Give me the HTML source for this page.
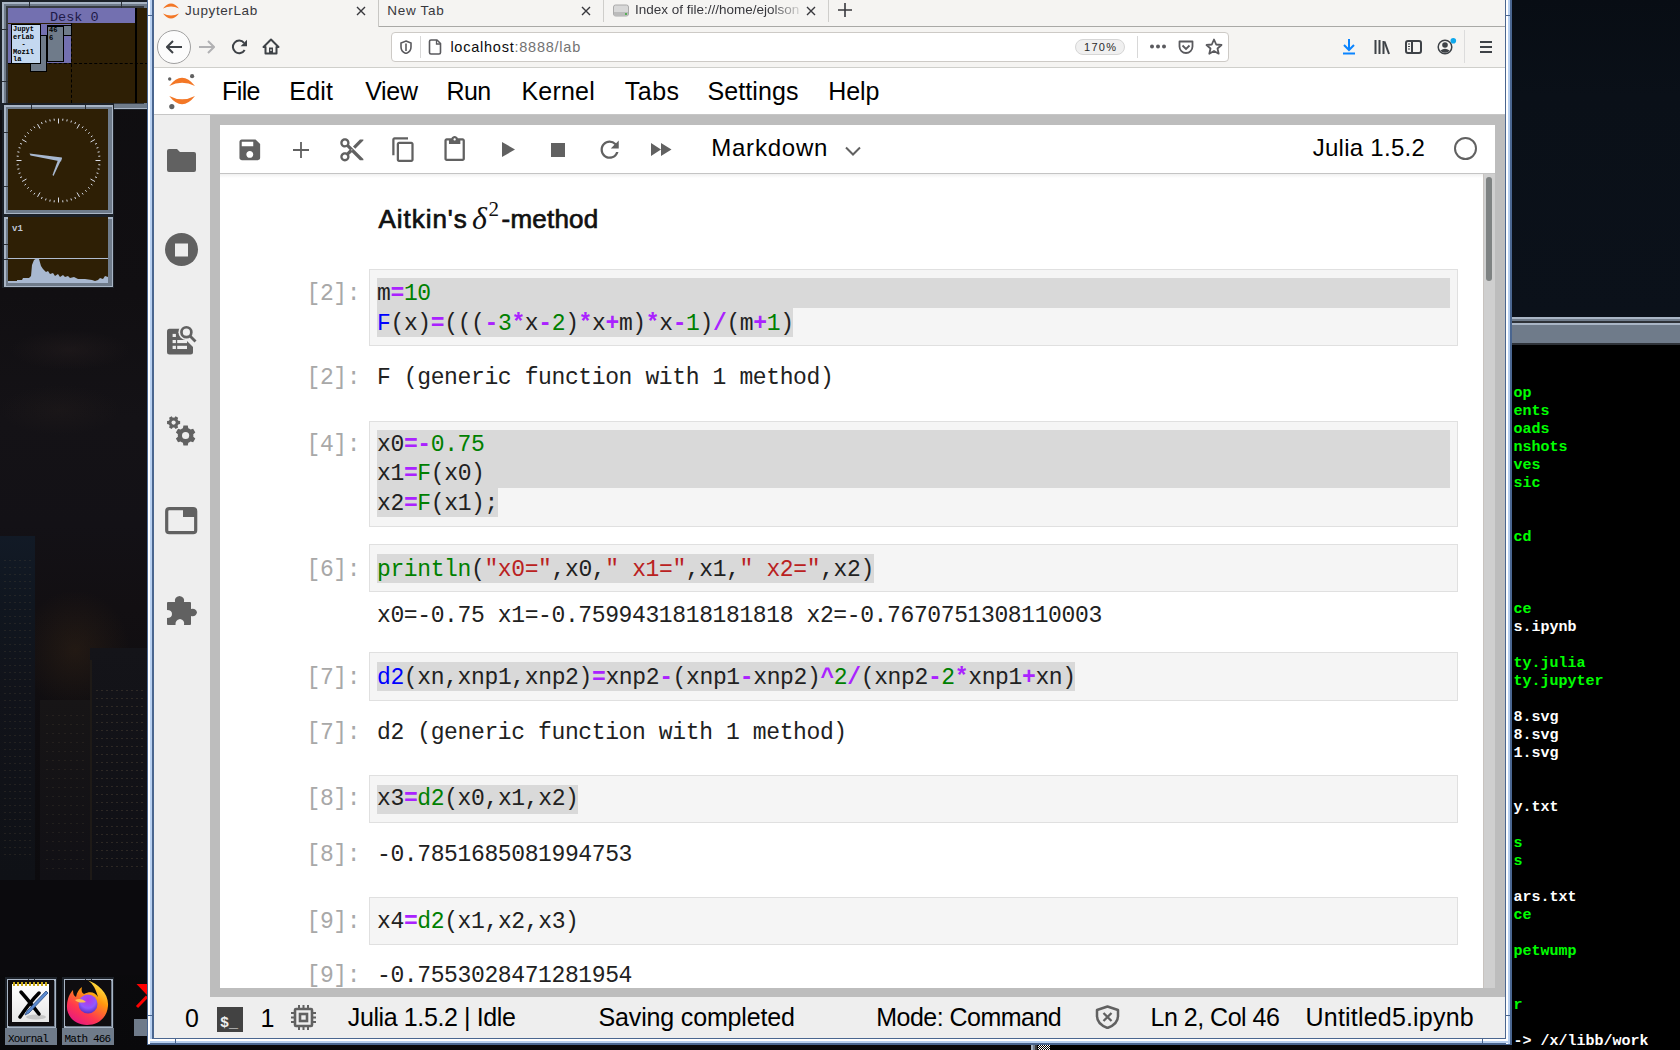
<!DOCTYPE html>
<html><head><meta charset="utf-8">
<style>
*{box-sizing:border-box;margin:0;padding:0}
html,body{width:1680px;height:1050px;overflow:hidden;background:#0c0b0d;position:relative}
.t{position:absolute;white-space:pre}
.r{position:absolute;display:block}
</style></head><body>
<div class="r" style="left:0px;top:0px;width:1680px;height:1050px;background:linear-gradient(180deg,#0e0d10 0%,#110f12 28%,#141216 40%,#131116 50%,#120f12 58%,#0f0d10 70%,#0c0b0e 84%,#09090b 100%);"></div>
<div class="r" style="left:0px;top:290px;width:147px;height:690px;background:radial-gradient(ellipse 60px 20px at 70px 60px,rgba(45,35,35,0.35),rgba(0,0,0,0)),radial-gradient(ellipse 60px 25px at 60px 120px,rgba(40,32,30,0.3),rgba(0,0,0,0)),radial-gradient(ellipse 55px 60px at 75px 360px,rgba(55,38,22,0.45),rgba(0,0,0,0));"></div>
<div class="r" style="left:0px;top:536px;width:35px;height:344px;background:linear-gradient(180deg,#121a26 0%,#10161f 20%,#11131a 45%,#0f1116 100%);"></div>
<div class="r" style="left:40px;top:700px;width:50px;height:180px;background:linear-gradient(180deg,#171516,#111015);"></div>
<div class="r" style="left:90px;top:648px;width:57px;height:232px;background:linear-gradient(180deg,#141419,#101015);"></div>
<div class="r" style="left:90px;top:660px;width:2px;height:220px;background:#1e1a17;"></div>
<div class="r" style="left:0px;top:880px;width:147px;height:95px;background:#0b0a0d;"></div>
<div class="r" style="left:4px;top:560px;width:28px;height:300px;background:repeating-linear-gradient(180deg,rgba(90,80,60,0.25) 0 1px,transparent 1px 7px);-webkit-mask-image:repeating-linear-gradient(90deg,#000 0 2px,transparent 2px 5px)"></div>
<div class="r" style="left:96px;top:690px;width:48px;height:180px;background:repeating-linear-gradient(180deg,rgba(110,95,70,0.3) 0 1px,transparent 1px 8px);-webkit-mask-image:repeating-linear-gradient(90deg,#000 0 2px,transparent 2px 5px)"></div>
<div class="r" style="left:46px;top:715px;width:40px;height:160px;background:repeating-linear-gradient(180deg,rgba(90,80,60,0.22) 0 1px,transparent 1px 9px);-webkit-mask-image:repeating-linear-gradient(90deg,#000 0 2px,transparent 2px 6px)"></div>
<div class="r" style="left:1512px;top:0px;width:168px;height:317px;background:linear-gradient(180deg,#080d14 0%,#0a1018 30%,#0b111a 100%);"></div>
<div class="r" style="left:1512px;top:317px;width:168px;height:28px;background:#6f7b8a;"></div>
<div class="r" style="left:1512px;top:317px;width:168px;height:2px;background:#a9b5c5;"></div>
<div class="r" style="left:1512px;top:321px;width:168px;height:2px;background:#2e3238;"></div>
<div class="r" style="left:1512px;top:323px;width:168px;height:2px;background:#a9b5c5;"></div>
<div class="r" style="left:1512px;top:343px;width:168px;height:2px;background:#2e3238;"></div>
<div class="r" style="left:1512px;top:345px;width:168px;height:705px;background:#000;"></div>
<div class="t" style="left:1513.50px;top:384.51px;font-family:'Liberation Mono';font-size:15px;line-height:1.1328em;color:#00ff00;font-weight:bold;letter-spacing:0px;">op</div>
<div class="t" style="left:1513.50px;top:402.51px;font-family:'Liberation Mono';font-size:15px;line-height:1.1328em;color:#00ff00;font-weight:bold;letter-spacing:0px;">ents</div>
<div class="t" style="left:1513.50px;top:420.51px;font-family:'Liberation Mono';font-size:15px;line-height:1.1328em;color:#00ff00;font-weight:bold;letter-spacing:0px;">oads</div>
<div class="t" style="left:1513.50px;top:438.51px;font-family:'Liberation Mono';font-size:15px;line-height:1.1328em;color:#00ff00;font-weight:bold;letter-spacing:0px;">nshots</div>
<div class="t" style="left:1513.50px;top:456.51px;font-family:'Liberation Mono';font-size:15px;line-height:1.1328em;color:#00ff00;font-weight:bold;letter-spacing:0px;">ves</div>
<div class="t" style="left:1513.50px;top:474.51px;font-family:'Liberation Mono';font-size:15px;line-height:1.1328em;color:#00ff00;font-weight:bold;letter-spacing:0px;">sic</div>
<div class="t" style="left:1513.50px;top:528.51px;font-family:'Liberation Mono';font-size:15px;line-height:1.1328em;color:#00ff00;font-weight:bold;letter-spacing:0px;">cd</div>
<div class="t" style="left:1513.50px;top:600.51px;font-family:'Liberation Mono';font-size:15px;line-height:1.1328em;color:#00ff00;font-weight:bold;letter-spacing:0px;">ce</div>
<div class="t" style="left:1513.50px;top:618.51px;font-family:'Liberation Mono';font-size:15px;line-height:1.1328em;color:#ffffff;font-weight:bold;letter-spacing:0px;">s.ipynb</div>
<div class="t" style="left:1513.50px;top:654.51px;font-family:'Liberation Mono';font-size:15px;line-height:1.1328em;color:#00ff00;font-weight:bold;letter-spacing:0px;">ty.julia</div>
<div class="t" style="left:1513.50px;top:672.51px;font-family:'Liberation Mono';font-size:15px;line-height:1.1328em;color:#00ff00;font-weight:bold;letter-spacing:0px;">ty.jupyter</div>
<div class="t" style="left:1513.50px;top:708.51px;font-family:'Liberation Mono';font-size:15px;line-height:1.1328em;color:#ffffff;font-weight:bold;letter-spacing:0px;">8.svg</div>
<div class="t" style="left:1513.50px;top:726.51px;font-family:'Liberation Mono';font-size:15px;line-height:1.1328em;color:#ffffff;font-weight:bold;letter-spacing:0px;">8.svg</div>
<div class="t" style="left:1513.50px;top:744.51px;font-family:'Liberation Mono';font-size:15px;line-height:1.1328em;color:#ffffff;font-weight:bold;letter-spacing:0px;">1.svg</div>
<div class="t" style="left:1513.50px;top:798.51px;font-family:'Liberation Mono';font-size:15px;line-height:1.1328em;color:#ffffff;font-weight:bold;letter-spacing:0px;">y.txt</div>
<div class="t" style="left:1513.50px;top:834.51px;font-family:'Liberation Mono';font-size:15px;line-height:1.1328em;color:#00ff00;font-weight:bold;letter-spacing:0px;">s</div>
<div class="t" style="left:1513.50px;top:852.51px;font-family:'Liberation Mono';font-size:15px;line-height:1.1328em;color:#00ff00;font-weight:bold;letter-spacing:0px;">s</div>
<div class="t" style="left:1513.50px;top:888.51px;font-family:'Liberation Mono';font-size:15px;line-height:1.1328em;color:#ffffff;font-weight:bold;letter-spacing:0px;">ars.txt</div>
<div class="t" style="left:1513.50px;top:906.51px;font-family:'Liberation Mono';font-size:15px;line-height:1.1328em;color:#00ff00;font-weight:bold;letter-spacing:0px;">ce</div>
<div class="t" style="left:1513.50px;top:942.51px;font-family:'Liberation Mono';font-size:15px;line-height:1.1328em;color:#00ff00;font-weight:bold;letter-spacing:0px;">petwump</div>
<div class="t" style="left:1513.50px;top:996.51px;font-family:'Liberation Mono';font-size:15px;line-height:1.1328em;color:#00ff00;font-weight:bold;letter-spacing:0px;">r</div>
<div class="t" style="left:1513.50px;top:1032.51px;font-family:'Liberation Mono';font-size:15px;line-height:1.1328em;color:#ffffff;font-weight:bold;letter-spacing:0px;">-> /x/libb/work</div>
<div class="r" style="left:0px;top:0px;width:150px;height:110px;background:#1c2128;"></div>
<div class="r" style="left:1.5px;top:1.5px;width:147px;height:107px;background:#a9b5c5;"></div>
<div class="r" style="left:4px;top:4px;width:144px;height:104px;background:#6f7b8a;"></div>
<div class="r" style="left:6px;top:6px;width:138px;height:98px;background:#383c42;"></div>
<div class="r" style="left:29px;top:1.5px;width:1.2px;height:6px;background:#2a2f36;"></div>
<div class="r" style="left:121px;top:1.5px;width:1.2px;height:6px;background:#2a2f36;"></div>
<div class="r" style="left:1.5px;top:29px;width:6px;height:1.2px;background:#2a2f36;"></div>
<div class="r" style="left:1.5px;top:81px;width:6px;height:1.2px;background:#2a2f36;"></div>
<div class="r" style="left:8px;top:8px;width:140px;height:95px;background:#2e1f05;"></div>
<div class="r" style="left:8px;top:8px;width:127px;height:15px;background:#7370b0;"></div>
<div class="t" style="left:50.00px;top:9.76px;font-family:'Liberation Mono';font-size:13.5px;line-height:1.1328em;color:#1e1a48;font-weight:normal;letter-spacing:0px;">Desk 0</div>
<div class="r" style="left:135px;top:8px;width:2px;height:95px;background:#000;"></div>
<div class="r" style="left:8px;top:63px;width:140px;height:0;border-top:1px dashed #000"></div>
<div class="r" style="left:71px;top:23px;width:0;height:80px;border-left:1px dashed #000"></div>
<div class="r" style="left:8px;top:24px;width:63px;height:39px;background:#7370b0;"></div>
<div class="r" style="left:30px;top:35px;width:17px;height:37px;background:#000;"></div>
<div class="r" style="left:31px;top:36px;width:15px;height:35px;background:#6f7b8a;"></div>
<div class="r" style="left:47px;top:25px;width:25px;height:11px;background:#000;"></div>
<div class="r" style="left:48px;top:26px;width:23px;height:9px;background:#6f7b8a;"></div>
<div class="r" style="left:47px;top:26px;width:17px;height:36px;background:#000;"></div>
<div class="r" style="left:48px;top:27px;width:15px;height:34px;background:#6f7b8a;"></div>
<div class="r" style="left:11px;top:24px;width:30px;height:40px;background:#000;"></div>
<div class="r" style="left:12px;top:25px;width:28px;height:38px;background:#c4d8f0;"></div>
<div class="t" style="left:13px;top:26px;font:bold 7px/7.5px 'Liberation Mono';color:#000">Jupyt
erLab
  -
Mozil
la</div>
<div class="t" style="left:49px;top:27px;font:bold 7px/7.5px 'Liberation Mono';color:#000">46
6</div>
<div class="r" style="left:2px;top:103px;width:112px;height:112px;background:#1c2128;"></div>
<div class="r" style="left:3.5px;top:104.5px;width:109px;height:109px;background:#a9b5c5;"></div>
<div class="r" style="left:6px;top:107px;width:106px;height:106px;background:#6f7b8a;"></div>
<div class="r" style="left:8px;top:109px;width:100px;height:100px;background:#383c42;"></div>
<div class="r" style="left:31px;top:104.5px;width:1.2px;height:6px;background:#2a2f36;"></div>
<div class="r" style="left:85px;top:104.5px;width:1.2px;height:6px;background:#2a2f36;"></div>
<div class="r" style="left:3.5px;top:132px;width:6px;height:1.2px;background:#2a2f36;"></div>
<div class="r" style="left:3.5px;top:186px;width:6px;height:1.2px;background:#2a2f36;"></div>
<div class="r" style="left:8px;top:109px;width:100px;height:101px;background:#2e1f05;"></div>
<svg class="r" style="left:0px;top:0px;" width="120" height="220" viewBox="0 0 120 220"><line x1="58.5" y1="118.5" x2="58.5" y2="123.5" stroke="#d8dce8" stroke-width="1"/><line x1="62.9" y1="118.7" x2="62.7" y2="120.7" stroke="#d8dce8" stroke-width="1"/><line x1="67.2" y1="119.4" x2="66.8" y2="121.4" stroke="#d8dce8" stroke-width="1"/><line x1="71.5" y1="120.6" x2="70.9" y2="122.5" stroke="#d8dce8" stroke-width="1"/><line x1="75.6" y1="122.1" x2="74.8" y2="124.0" stroke="#d8dce8" stroke-width="1"/><line x1="79.5" y1="124.1" x2="77.0" y2="128.5" stroke="#d8dce8" stroke-width="1"/><line x1="83.2" y1="126.5" x2="82.0" y2="128.1" stroke="#d8dce8" stroke-width="1"/><line x1="86.6" y1="129.3" x2="85.3" y2="130.8" stroke="#d8dce8" stroke-width="1"/><line x1="89.7" y1="132.4" x2="88.2" y2="133.7" stroke="#d8dce8" stroke-width="1"/><line x1="92.5" y1="135.8" x2="90.9" y2="137.0" stroke="#d8dce8" stroke-width="1"/><line x1="94.9" y1="139.5" x2="90.5" y2="142.0" stroke="#d8dce8" stroke-width="1"/><line x1="96.9" y1="143.4" x2="95.0" y2="144.2" stroke="#d8dce8" stroke-width="1"/><line x1="98.4" y1="147.5" x2="96.5" y2="148.1" stroke="#d8dce8" stroke-width="1"/><line x1="99.6" y1="151.8" x2="97.6" y2="152.2" stroke="#d8dce8" stroke-width="1"/><line x1="100.3" y1="156.1" x2="98.3" y2="156.3" stroke="#d8dce8" stroke-width="1"/><line x1="100.5" y1="160.5" x2="95.5" y2="160.5" stroke="#d8dce8" stroke-width="1"/><line x1="100.3" y1="164.9" x2="98.3" y2="164.7" stroke="#d8dce8" stroke-width="1"/><line x1="99.6" y1="169.2" x2="97.6" y2="168.8" stroke="#d8dce8" stroke-width="1"/><line x1="98.4" y1="173.5" x2="96.5" y2="172.9" stroke="#d8dce8" stroke-width="1"/><line x1="96.9" y1="177.6" x2="95.0" y2="176.8" stroke="#d8dce8" stroke-width="1"/><line x1="94.9" y1="181.5" x2="90.5" y2="179.0" stroke="#d8dce8" stroke-width="1"/><line x1="92.5" y1="185.2" x2="90.9" y2="184.0" stroke="#d8dce8" stroke-width="1"/><line x1="89.7" y1="188.6" x2="88.2" y2="187.3" stroke="#d8dce8" stroke-width="1"/><line x1="86.6" y1="191.7" x2="85.3" y2="190.2" stroke="#d8dce8" stroke-width="1"/><line x1="83.2" y1="194.5" x2="82.0" y2="192.9" stroke="#d8dce8" stroke-width="1"/><line x1="79.5" y1="196.9" x2="77.0" y2="192.5" stroke="#d8dce8" stroke-width="1"/><line x1="75.6" y1="198.9" x2="74.8" y2="197.0" stroke="#d8dce8" stroke-width="1"/><line x1="71.5" y1="200.4" x2="70.9" y2="198.5" stroke="#d8dce8" stroke-width="1"/><line x1="67.2" y1="201.6" x2="66.8" y2="199.6" stroke="#d8dce8" stroke-width="1"/><line x1="62.9" y1="202.3" x2="62.7" y2="200.3" stroke="#d8dce8" stroke-width="1"/><line x1="58.5" y1="202.5" x2="58.5" y2="197.5" stroke="#d8dce8" stroke-width="1"/><line x1="54.1" y1="202.3" x2="54.3" y2="200.3" stroke="#d8dce8" stroke-width="1"/><line x1="49.8" y1="201.6" x2="50.2" y2="199.6" stroke="#d8dce8" stroke-width="1"/><line x1="45.5" y1="200.4" x2="46.1" y2="198.5" stroke="#d8dce8" stroke-width="1"/><line x1="41.4" y1="198.9" x2="42.2" y2="197.0" stroke="#d8dce8" stroke-width="1"/><line x1="37.5" y1="196.9" x2="40.0" y2="192.5" stroke="#d8dce8" stroke-width="1"/><line x1="33.8" y1="194.5" x2="35.0" y2="192.9" stroke="#d8dce8" stroke-width="1"/><line x1="30.4" y1="191.7" x2="31.7" y2="190.2" stroke="#d8dce8" stroke-width="1"/><line x1="27.3" y1="188.6" x2="28.8" y2="187.3" stroke="#d8dce8" stroke-width="1"/><line x1="24.5" y1="185.2" x2="26.1" y2="184.0" stroke="#d8dce8" stroke-width="1"/><line x1="22.1" y1="181.5" x2="26.5" y2="179.0" stroke="#d8dce8" stroke-width="1"/><line x1="20.1" y1="177.6" x2="22.0" y2="176.8" stroke="#d8dce8" stroke-width="1"/><line x1="18.6" y1="173.5" x2="20.5" y2="172.9" stroke="#d8dce8" stroke-width="1"/><line x1="17.4" y1="169.2" x2="19.4" y2="168.8" stroke="#d8dce8" stroke-width="1"/><line x1="16.7" y1="164.9" x2="18.7" y2="164.7" stroke="#d8dce8" stroke-width="1"/><line x1="16.5" y1="160.5" x2="21.5" y2="160.5" stroke="#d8dce8" stroke-width="1"/><line x1="16.7" y1="156.1" x2="18.7" y2="156.3" stroke="#d8dce8" stroke-width="1"/><line x1="17.4" y1="151.8" x2="19.4" y2="152.2" stroke="#d8dce8" stroke-width="1"/><line x1="18.6" y1="147.5" x2="20.5" y2="148.1" stroke="#d8dce8" stroke-width="1"/><line x1="20.1" y1="143.4" x2="22.0" y2="144.2" stroke="#d8dce8" stroke-width="1"/><line x1="22.1" y1="139.5" x2="26.5" y2="142.0" stroke="#d8dce8" stroke-width="1"/><line x1="24.5" y1="135.8" x2="26.1" y2="137.0" stroke="#d8dce8" stroke-width="1"/><line x1="27.3" y1="132.4" x2="28.8" y2="133.7" stroke="#d8dce8" stroke-width="1"/><line x1="30.4" y1="129.3" x2="31.7" y2="130.8" stroke="#d8dce8" stroke-width="1"/><line x1="33.8" y1="126.5" x2="35.0" y2="128.1" stroke="#d8dce8" stroke-width="1"/><line x1="37.5" y1="124.1" x2="40.0" y2="128.5" stroke="#d8dce8" stroke-width="1"/><line x1="41.4" y1="122.1" x2="42.2" y2="124.0" stroke="#d8dce8" stroke-width="1"/><line x1="45.5" y1="120.6" x2="46.1" y2="122.5" stroke="#d8dce8" stroke-width="1"/><line x1="49.8" y1="119.4" x2="50.2" y2="121.4" stroke="#d8dce8" stroke-width="1"/><line x1="54.1" y1="118.7" x2="54.3" y2="120.7" stroke="#d8dce8" stroke-width="1"/><polygon points="29.5,153.5 62,157.5 61,161.5 30.5,155.5" fill="#a8b8d0"/><polygon points="58.5,158.5 62,158 53.5,176 52.5,175" fill="#a8b8d0"/></svg>
<div class="r" style="left:2px;top:215px;width:112px;height:73px;background:#1c2128;"></div>
<div class="r" style="left:3.5px;top:216.5px;width:109px;height:70px;background:#a9b5c5;"></div>
<div class="r" style="left:6px;top:219px;width:106px;height:67px;background:#6f7b8a;"></div>
<div class="r" style="left:8px;top:221px;width:100px;height:61px;background:#383c42;"></div>
<div class="r" style="left:31px;top:216.5px;width:1.2px;height:6px;background:#2a2f36;"></div>
<div class="r" style="left:85px;top:216.5px;width:1.2px;height:6px;background:#2a2f36;"></div>
<div class="r" style="left:3.5px;top:244px;width:6px;height:1.2px;background:#2a2f36;"></div>
<div class="r" style="left:3.5px;top:259px;width:6px;height:1.2px;background:#2a2f36;"></div>
<div class="r" style="left:8px;top:217px;width:100px;height:66px;background:#2e1f05;"></div>
<div class="t" style="left:12.00px;top:223.51px;font-family:'Liberation Mono';font-size:9px;line-height:1.1328em;color:#c0c8d8;font-weight:bold;letter-spacing:0px;">v1</div>
<div class="r" style="left:8px;top:258px;width:100px;height:1px;background:#b0bcd0;"></div>
<svg class="r" style="left:0px;top:0px;" width="120" height="290" viewBox="0 0 120 290"><polygon points="8,283 8,281 17,281 17,280 22,280 23,278 29,278 31,276 32,265 34,260 37,258 39,259 41,266 43,269 46,272 48,271 50,274 53,273 55,276 58,274 60,277 63,275 65,277 68,276 70,278 74,277 78,279 85,279 92,280 95,281 98,280 100,278 103,279 105,276 108,277 108,283" fill="#a8b8d0"/></svg>
<div class="r" style="left:5px;top:977px;width:52px;height:52px;background:#1c2128;"></div>
<div class="r" style="left:6.5px;top:978.5px;width:49px;height:49px;background:#a9b5c5;"></div>
<div class="r" style="left:9px;top:981px;width:46px;height:46px;background:#6f7b8a;"></div>
<div class="r" style="left:11px;top:983px;width:40px;height:40px;background:#383c42;"></div>
<div class="r" style="left:34px;top:978.5px;width:1.2px;height:6px;background:#2a2f36;"></div>
<div class="r" style="left:28px;top:978.5px;width:1.2px;height:6px;background:#2a2f36;"></div>
<div class="r" style="left:8px;top:980px;width:46px;height:46px;background:#0f0d10;"></div>
<div class="r" style="left:12px;top:984px;width:37px;height:38px;background:linear-gradient(180deg,#ffffff,#e6e6e6);"></div>
<div class="r" style="left:13px;top:982px;width:35px;height:4px;background:repeating-linear-gradient(90deg,#c8a814 0 2px,transparent 2px 4px);"></div>
<svg class="r" style="left:12px;top:984px;" width="37" height="38" viewBox="0 0 37 38"><path d="M9 8 Q17 17 27 30" stroke="#000" stroke-width="3.5" fill="none" stroke-linecap="round"/><path d="M27 9 Q18 18 8 33" stroke="#000" stroke-width="3.5" fill="none" stroke-linecap="round"/><path d="M34 7 L15 27 L13 31 L17 29 L36 9Z" fill="#5a8ad0" stroke="#2a4a80" stroke-width="0.8"/><ellipse cx="24" cy="33" rx="10" ry="2.5" fill="rgba(0,0,0,0.15)"/></svg>
<div class="r" style="left:5px;top:1028px;width:52px;height:17px;background:#6f7b8a;"></div>
<div class="t" style="left:8.00px;top:1032.84px;font-family:'Liberation Mono';font-size:11px;line-height:1.1328em;color:#000;font-weight:normal;letter-spacing:-0.9px;">Xournal</div>
<div class="r" style="left:62px;top:977px;width:52px;height:52px;background:#1c2128;"></div>
<div class="r" style="left:63.5px;top:978.5px;width:49px;height:49px;background:#a9b5c5;"></div>
<div class="r" style="left:66px;top:981px;width:46px;height:46px;background:#6f7b8a;"></div>
<div class="r" style="left:68px;top:983px;width:40px;height:40px;background:#383c42;"></div>
<div class="r" style="left:91px;top:978.5px;width:1.2px;height:6px;background:#2a2f36;"></div>
<div class="r" style="left:85px;top:978.5px;width:1.2px;height:6px;background:#2a2f36;"></div>
<div class="r" style="left:65px;top:980px;width:46px;height:46px;background:#0f0d10;"></div>
<svg class="r" style="left:65px;top:978px;" width="46" height="48" viewBox="0 0 46 48"><defs><linearGradient id="ff" x1="0.8" y1="0" x2="0.2" y2="1"><stop offset="0" stop-color="#fff44f"/><stop offset="0.35" stop-color="#ff980e"/><stop offset="0.7" stop-color="#ff3750"/><stop offset="1" stop-color="#e31587"/></linearGradient><radialGradient id="fp" cx="50%" cy="30%" r="70%"><stop offset="0" stop-color="#b833e1"/><stop offset="0.6" stop-color="#9059ff"/><stop offset="1" stop-color="#5b2fc0"/></radialGradient></defs><path d="M22 2 C34 6 44 16 43 28 C42 40 33 47 22 47 C10 47 1 38 2 27 C2.5 20 5 15 8 12 C8 16 9 18 11 19 C12 14 14 11 17 9 C16 13 17 15 19 16 C25 13 30 14 33 19 C30 8 26 4 22 2Z" fill="url(#ff)"/><circle cx="23" cy="26" r="9.5" fill="url(#fp)"/><path d="M10 22 C14 20 18 21 21 24 C17 25 13 25 10 22Z" fill="#ffbd4f"/></svg>
<div class="r" style="left:62px;top:1028px;width:52px;height:17px;background:#6f7b8a;"></div>
<div class="t" style="left:64.50px;top:1032.84px;font-family:'Liberation Mono';font-size:11px;line-height:1.1328em;color:#000;font-weight:normal;letter-spacing:-0.9px;">Math 466</div>
<svg class="r" style="left:134px;top:983px;" width="14" height="26" viewBox="0 0 14 26"><path d="M2.5 1H13V12Z" fill="#ff0000"/><path d="M3 24 L13 13.5" stroke="#ff0000" stroke-width="3"/></svg>
<div class="r" style="left:134px;top:1019px;width:13px;height:17px;background:#6f7b8a;"></div>
<div class="r" style="left:147px;top:0px;width:1365px;height:1045px;background:#4a6690;"></div>
<div class="r" style="left:148px;top:0px;width:2px;height:1044px;background:#ffffff;"></div>
<div class="r" style="left:150px;top:0px;width:2px;height:1042px;background:#b8d0f0;"></div>
<div class="r" style="left:1506px;top:0px;width:2px;height:1044px;background:#ffffff;"></div>
<div class="r" style="left:1508px;top:0px;width:2px;height:1044px;background:#b8d0f0;"></div>
<div class="r" style="left:148px;top:1039px;width:1360px;height:2px;background:#ffffff;"></div>
<div class="r" style="left:150px;top:1041px;width:1360px;height:2px;background:#b8d0f0;"></div>
<div class="r" style="left:147px;top:15px;width:7px;height:1px;background:#4a6690;"></div>
<div class="r" style="left:1505px;top:15px;width:7px;height:1px;background:#4a6690;"></div>
<div class="r" style="left:147px;top:1015px;width:7px;height:1px;background:#4a6690;"></div>
<div class="r" style="left:1505px;top:1015px;width:7px;height:1px;background:#4a6690;"></div>
<div class="r" style="left:175px;top:1038px;width:1px;height:7px;background:#4a6690;"></div>
<div class="r" style="left:1482px;top:1038px;width:1px;height:7px;background:#4a6690;"></div>
<div class="r" style="left:154px;top:0px;width:1351px;height:67px;background:#f5f4f2;"></div>
<div class="r" style="left:378px;top:26px;width:1127px;height:1px;background:#a9a9a6;"></div>
<div class="r" style="left:378px;top:0px;width:1px;height:27px;background:#c8c7c4;"></div>
<div class="r" style="left:603px;top:0px;width:1px;height:22px;background:#cfcecb;"></div>
<div class="r" style="left:828px;top:0px;width:1px;height:22px;background:#cfcecb;"></div>
<svg class="r" style="left:163px;top:3px;" width="16" height="16" viewBox="0 0 16 16"><path d="M0 5.5 Q8 -4.5 16 5.5 Q8 1.5 0 5.5Z" fill="#f37726"/><path d="M0 10.5 Q8 20.5 16 10.5 Q8 14.5 0 10.5Z" fill="#f37726"/></svg>
<div class="t" style="left:185.00px;top:2.68px;font-family:'Liberation Sans';font-size:13.5px;line-height:1.1172em;color:#38383d;font-weight:normal;letter-spacing:0.6px;">JupyterLab</div>
<svg class="r" style="left:356px;top:6px;" width="10" height="10" viewBox="0 0 10 10"><path d="M1 1L9 9M9 1L1 9" stroke="#38383d" stroke-width="1.4"/></svg>
<div class="t" style="left:387.20px;top:2.68px;font-family:'Liberation Sans';font-size:13.5px;line-height:1.1172em;color:#38383d;font-weight:normal;letter-spacing:0.73px;">New Tab</div>
<svg class="r" style="left:581px;top:6px;" width="10" height="10" viewBox="0 0 10 10"><path d="M1 1L9 9M9 1L1 9" stroke="#38383d" stroke-width="1.4"/></svg>
<svg class="r" style="left:613px;top:4px;" width="16" height="13" viewBox="0 0 16 13"><rect x="0.5" y="1" width="15" height="11" rx="2" fill="#d8d8d8" stroke="#aaa"/><rect x="1" y="8" width="14" height="4" fill="#bbb"/><circle cx="13" cy="10" r="1" fill="#3a3"/></svg>
<div class="t" style="left:635px;top:2.3px;font-family:'Liberation Sans';font-size:13.5px;line-height:1.1172em;color:#38383d;width:170px;overflow:hidden;-webkit-mask-image:linear-gradient(90deg,#000 80%,transparent 100%)">Index of file:///home/ejolson</div>
<svg class="r" style="left:806px;top:6px;" width="10" height="10" viewBox="0 0 10 10"><path d="M1 1L9 9M9 1L1 9" stroke="#38383d" stroke-width="1.4"/></svg>
<svg class="r" style="left:838px;top:3px;" width="14" height="14" viewBox="0 0 14 14"><path d="M7 0V14M0 7H14" stroke="#38383d" stroke-width="1.6"/></svg>
<div class="r" style="left:154px;top:67px;width:1351px;height:1px;background:#cfcfcb;"></div>
<div class="r" style="left:157px;top:30px;width:34px;height:34px;border-radius:50%;border:1px solid #a0a0a0;background:#fcfcfc"></div>
<svg class="r" style="left:166px;top:40px;" width="16" height="14" viewBox="0 0 16 14"><path d="M7 1L1 7L7 13M1 7H16" stroke="#3e4247" stroke-width="2" fill="none"/></svg>
<svg class="r" style="left:199px;top:40px;" width="16" height="14" viewBox="0 0 16 14"><path d="M9 1L15 7L9 13M15 7H0" stroke="#b1b1b3" stroke-width="2" fill="none"/></svg>
<svg class="r" style="left:231px;top:39px;" width="17" height="16" viewBox="0 0 17 16"><path d="M13.03 3.85A6.3 6.3 0 1 0 13.66 11.05" fill="none" stroke="#3e4247" stroke-width="2"/><path d="M16 0.8V7.2H9.6Z" fill="#3e4247"/></svg>
<svg class="r" style="left:262px;top:38px;" width="18" height="17" viewBox="0 0 18 17"><path d="M9 1.5L1.5 9H3.5V15.5H14.5V9H16.5Z" fill="none" stroke="#3e4247" stroke-width="2" stroke-linejoin="round"/><rect x="7" y="9.5" width="4" height="6" fill="#3e4247"/><rect x="8.3" y="11.3" width="1.4" height="1.6" fill="#f5f4f2"/></svg>
<div class="r" style="left:391px;top:32px;width:838px;height:30px;border-radius:4px;border:1px solid #cdcac6;background:#fff"></div>
<svg class="r" style="left:400px;top:40px;" width="12" height="14" viewBox="0 0 12 14"><path d="M6 1L11 3V7C11 10 9 12.5 6 13.5C3 12.5 1 10 1 7V3Z" fill="none" stroke="#5a5a5e" stroke-width="1.6"/><path d="M6 3.5V11" stroke="#5a5a5e" stroke-width="1.6"/></svg>
<div class="r" style="left:420px;top:36px;width:1px;height:22px;background:#d8d8d8;"></div>
<svg class="r" style="left:428px;top:39px;" width="14" height="16" viewBox="0 0 14 16"><path d="M1.5 2.5Q1.5 1 3 1H9L12.5 4.5V13.5Q12.5 15 11 15H3Q1.5 15 1.5 13.5Z" fill="none" stroke="#5a5a5e" stroke-width="1.6" stroke-linejoin="round"/><path d="M8.5 1V5H12.5" fill="none" stroke="#5a5a5e" stroke-width="1.3"/></svg>
<div class="t" style="left:450.4px;top:38.5px;font-family:'Liberation Sans';font-size:14.5px;line-height:1.1172em;letter-spacing:0.76px;color:#0c0c0d">localhost<span style="color:#737373">:8888/lab</span></div>
<div class="r" style="left:1075px;top:39px;width:50px;height:16px;border-radius:8px;border:1px solid #d6d6d6;background:#f0f0f0"></div>
<div class="t" style="left:1084.00px;top:40.94px;font-family:'Liberation Sans';font-size:11px;line-height:1.1172em;color:#2a2a2a;font-weight:normal;letter-spacing:1.27px;">170%</div>
<div class="r" style="left:1137px;top:36px;width:1px;height:22px;background:#d8d8d8;"></div>
<svg class="r" style="left:1150px;top:44px;" width="16" height="5" viewBox="0 0 16 5"><circle cx="2" cy="2.5" r="2" fill="#5a5a5e"/><circle cx="8" cy="2.5" r="2" fill="#5a5a5e"/><circle cx="14" cy="2.5" r="2" fill="#5a5a5e"/></svg>
<svg class="r" style="left:1178px;top:40px;" width="16" height="14" viewBox="0 0 16 14"><path d="M1.5 1.5H14.5V6.5A6.5 6.5 0 0 1 1.5 6.5Z" fill="none" stroke="#5a5a5e" stroke-width="1.8" stroke-linejoin="round"/><path d="M4.5 5.5L8 9L11.5 5.5" fill="none" stroke="#5a5a5e" stroke-width="1.8"/></svg>
<svg class="r" style="left:1205px;top:38px;" width="18" height="17" viewBox="0 0 18 17"><path d="M9 1.5L11.2 6.5L16.5 7L12.5 10.5L13.7 15.7L9 13L4.3 15.7L5.5 10.5L1.5 7L6.8 6.5Z" fill="none" stroke="#5a5a5e" stroke-width="1.8" stroke-linejoin="round"/></svg>
<svg class="r" style="left:1342px;top:38px;" width="14" height="17" viewBox="0 0 14 17"><path d="M7 1V12M2 7L7 12L12 7" fill="none" stroke="#0a84ff" stroke-width="2"/><rect x="1" y="14.5" width="12" height="2" fill="#0a84ff"/></svg>
<svg class="r" style="left:1374px;top:40px;" width="16" height="15" viewBox="0 0 16 15"><rect x="0.5" y="0" width="2" height="14" fill="#3e4247"/><rect x="4.5" y="0" width="2" height="14" fill="#3e4247"/><rect x="8.5" y="1" width="2" height="13" fill="#3e4247"/><path d="M10.5 1.5L15 14" stroke="#3e4247" stroke-width="2"/></svg>
<svg class="r" style="left:1405px;top:40px;" width="17" height="14" viewBox="0 0 17 14"><rect x="1" y="1" width="15" height="12" rx="2" fill="none" stroke="#3e4247" stroke-width="2"/><path d="M7 1V13" stroke="#3e4247" stroke-width="2"/><path d="M3 4H5M3 6.5H5M3 9H5" stroke="#3e4247" stroke-width="1"/></svg>
<svg class="r" style="left:1437px;top:38px;" width="20" height="17" viewBox="0 0 20 17"><circle cx="8" cy="9" r="6.8" fill="none" stroke="#3e4247" stroke-width="1.5"/><circle cx="8" cy="7" r="2.8" fill="#3e4247"/><path d="M3.5 12.5Q8 9 12.5 12.5L11 14Q8 15.5 5 14Z" fill="#3e4247"/><circle cx="16.3" cy="2.8" r="2.8" fill="#0fa8ec"/></svg>
<div class="r" style="left:1464px;top:30px;width:1px;height:33px;background:#dcdcdc;"></div>
<svg class="r" style="left:1480px;top:41px;" width="13" height="12" viewBox="0 0 13 12"><path d="M0 1H12M0 6H12M0 11H12" stroke="#3e4247" stroke-width="2"/></svg>
<div class="r" style="left:154px;top:68px;width:1351px;height:46px;background:#ffffff;"></div>
<div class="r" style="left:154px;top:114px;width:1351px;height:1px;background:#c6c6c6;"></div>
<svg class="r" style="left:160px;top:68px;" width="40" height="46" viewBox="0 0 40 46"><circle cx="9.7" cy="11" r="1.7" fill="#616161"/><circle cx="32.1" cy="8.2" r="2.1" fill="#616161"/><circle cx="11.8" cy="38.6" r="2.6" fill="#616161"/><path d="M9.2 18 Q22 1.5 35 18 Q22 11.3 9.2 18Z" fill="#f37726"/><path d="M9.2 28 Q22 44.5 35 28 Q22 34.7 9.2 28Z" fill="#f37726"/></svg>
<div class="t" style="left:222.00px;top:77.97px;font-family:'Liberation Sans';font-size:25px;line-height:1.1172em;color:#000000;font-weight:normal;letter-spacing:-0.6px;">File</div>
<div class="t" style="left:289.30px;top:77.97px;font-family:'Liberation Sans';font-size:25px;line-height:1.1172em;color:#000000;font-weight:normal;letter-spacing:0.23px;">Edit</div>
<div class="t" style="left:365.20px;top:77.97px;font-family:'Liberation Sans';font-size:25px;line-height:1.1172em;color:#000000;font-weight:normal;letter-spacing:-0.3px;">View</div>
<div class="t" style="left:446.50px;top:77.97px;font-family:'Liberation Sans';font-size:25px;line-height:1.1172em;color:#000000;font-weight:normal;letter-spacing:-0.65px;">Run</div>
<div class="t" style="left:521.50px;top:77.97px;font-family:'Liberation Sans';font-size:25px;line-height:1.1172em;color:#000000;font-weight:normal;letter-spacing:0.2px;">Kernel</div>
<div class="t" style="left:624.80px;top:77.97px;font-family:'Liberation Sans';font-size:25px;line-height:1.1172em;color:#000000;font-weight:normal;letter-spacing:0.47px;">Tabs</div>
<div class="t" style="left:707.40px;top:77.97px;font-family:'Liberation Sans';font-size:25px;line-height:1.1172em;color:#000000;font-weight:normal;letter-spacing:0.11px;">Settings</div>
<div class="t" style="left:828.20px;top:77.97px;font-family:'Liberation Sans';font-size:25px;line-height:1.1172em;color:#000000;font-weight:normal;letter-spacing:-0.1px;">Help</div>
<div class="r" style="left:154px;top:115px;width:56px;height:882px;background:#eeeeee;"></div>
<div class="r" style="left:210px;top:115px;width:1295px;height:882px;background:#bdbdbd;"></div>
<svg class="r" style="left:167px;top:149px;" width="30" height="24" viewBox="0 0 30 24"><path d="M2 0H10L13 3H27Q29 3 29 5V21Q29 23 27 23H2Q0 23 0 21V2Q0 0 2 0Z" fill="#616161"/></svg>
<svg class="r" style="left:165px;top:233px;" width="34" height="34" viewBox="0 0 34 34"><circle cx="16.5" cy="16.5" r="16.5" fill="#616161"/><rect x="10" y="10.5" width="13" height="13" fill="#eeeeee"/></svg>
<svg class="r" style="left:166px;top:324px;" width="32" height="32" viewBox="0 0 32 32"><rect x="1" y="4.7" width="26" height="25.7" rx="2.5" fill="#616161"/><path d="M21 17 L27 23 V4 H21Z" fill="#eeeeee"/><circle cx="20.4" cy="8.2" r="8" fill="#eeeeee"/><circle cx="20.4" cy="8.2" r="4.95" fill="#eeeeee" stroke="#616161" stroke-width="2.7"/><path d="M23.8 11.8L29.5 17.5" stroke="#616161" stroke-width="2.8"/><g fill="#eeeeee"><rect x="6.6" y="9.9" width="3.3" height="3.1"/><rect x="6.6" y="16" width="3.3" height="3.1"/><rect x="6.6" y="21.8" width="3.3" height="3.2"/><rect x="11.2" y="16" width="9.8" height="3.1"/><rect x="11.2" y="21.8" width="9.8" height="3.2"/></g></svg>
<svg class="r" style="left:165px;top:413px;" width="34" height="35" viewBox="0 0 34 35"><path d="M13.11,7.43 L13.25,7.77 L15.13,8.11 L15.13,11.09 L13.25,11.43 L12.73,12.42 L12.51,12.71 L13.15,14.51 L10.58,16.00 L9.34,14.54 L8.23,14.59 L7.86,14.54 L6.62,16.00 L4.05,14.51 L4.69,12.71 L4.09,11.77 L3.95,11.43 L2.07,11.09 L2.07,8.11 L3.95,7.77 L4.47,6.78 L4.69,6.49 L4.05,4.69 L6.62,3.20 L7.86,4.66 L8.97,4.61 L9.34,4.66 L10.58,3.20 L13.15,4.69 L12.51,6.49Z" fill="#616161"/><path d="M17.19,15.49 L17.91,15.18 L18.42,12.54 L22.78,12.54 L23.29,15.18 L24.97,16.04 L25.59,16.51 L28.14,15.63 L30.32,19.41 L28.29,21.17 L28.38,23.05 L28.29,23.83 L30.32,25.59 L28.14,29.37 L25.59,28.49 L24.01,29.51 L23.29,29.82 L22.78,32.46 L18.42,32.46 L17.91,29.82 L16.23,28.96 L15.61,28.49 L13.06,29.37 L10.88,25.59 L12.91,23.83 L12.82,21.95 L12.91,21.17 L10.88,19.41 L13.06,15.63 L15.61,16.51Z" fill="#616161"/><circle cx="8.599999999999994" cy="9.600000000000023" r="2.1" fill="#eeeeee"/><circle cx="20.599999999999994" cy="22.5" r="3.6" fill="#eeeeee"/></svg>
<svg class="r" style="left:165px;top:507px;" width="33" height="28" viewBox="0 0 33 28"><rect x="1.7" y="1.7" width="29" height="24" rx="2.5" fill="none" stroke="#616161" stroke-width="3.2"/><rect x="18" y="1" width="13" height="9" fill="#616161"/></svg>
<svg class="r" style="left:166px;top:594px;" width="32" height="33" viewBox="0 0 32 33"><path d="M2 8H9Q8 3 13.5 2Q19 3 18 8H24Q25 8 25 9V15Q30 14 31 18.5Q30 23 25 22V30Q25 31 24 31H18Q19 26 14 25Q9 26 9.5 31H2Q1 31 1 30V24Q6 24 6 20Q6 16 1 16V9Q1 8 2 8Z" fill="#616161"/></svg>
<div class="r" style="left:220px;top:125px;width:1275px;height:863px;background:#ffffff;"></div>
<div class="r" style="left:220px;top:173px;width:1275px;height:1px;background:#c4c4c4;"></div>
<div class="r" style="left:220px;top:174px;width:1275px;height:4px;background:linear-gradient(180deg,rgba(0,0,0,0.06),rgba(0,0,0,0))"></div>
<svg class="r" style="left:235.85px;top:135.55px" width="27.6" height="27.6" viewBox="0 0 24 24"><path d="M17 3H5c-1.11 0-2 .9-2 2v14c0 1.1.89 2 2 2h14c1.1 0 2-.9 2-2V7l-4-4zm-5 16c-1.66 0-3-1.34-3-3s1.34-3 3-3 3 1.34 3 3-1.34 3-3 3zm3-10H5V5h10v4z" fill="#616161"/></svg>
<svg class="r" style="left:292px;top:141px;" width="18" height="18" viewBox="0 0 18 18"><path d="M9 1V17M1 9H17" stroke="#616161" stroke-width="1.8"/></svg>
<svg class="r" style="left:337.7px;top:135.6px" width="27.7" height="27.7" viewBox="0 0 24 24"><path d="M9.64 7.64c.23-.5.36-1.05.36-1.64 0-2.21-1.79-4-4-4S2 3.79 2 6s1.79 4 4 4c.59 0 1.14-.13 1.64-.36L10 12l-2.36 2.36C7.14 14.13 6.59 14 6 14c-2.21 0-4 1.79-4 4s1.79 4 4 4 4-1.79 4-4c0-.59-.13-1.14-.36-1.64L12 14l7 7h3v-1L9.64 7.64zM6 8c-1.1 0-2-.89-2-2s.9-2 2-2 2 .89 2 2-.9 2-2 2zm0 12c-1.1 0-2-.89-2-2s.9-2 2-2 2 .89 2 2-.9 2-2 2zm6-7.5c-.28 0-.5-.22-.5-.5s.22-.5.5-.5.5.22.5.5-.22.5-.5.5zM19 3l-6 6 2 2 7-7V3z" fill="#616161"/></svg>
<svg class="r" style="left:389.75px;top:136.2px" width="27" height="27" viewBox="0 0 24 24"><path d="M16 1H4c-1.1 0-2 .9-2 2v14h2V3h12V1zm3 4H8c-1.1 0-2 .9-2 2v14c0 1.1.9 2 2 2h11c1.1 0 2-.9 2-2V7c0-1.1-.9-2-2-2zm0 16H8V7h11v14z" fill="#616161"/></svg>
<svg class="r" style="left:440.6px;top:136.4px" width="27.3" height="27.3" viewBox="0 0 24 24"><path d="M19 2h-4.18C14.4.84 13.3 0 12 0c-1.3 0-2.4.84-2.82 2H5c-1.1 0-2 .9-2 2v16c0 1.1.9 2 2 2h14c1.1 0 2-.9 2-2V4c0-1.1-.9-2-2-2zm-7 0c.55 0 1 .45 1 1s-.45 1-1 1-1-.45-1-1 .45-1 1-1zm7 18H5V4h2v3h10V4h2v16z" fill="#616161"/></svg>
<svg class="r" style="left:502px;top:142px;" width="13" height="15" viewBox="0 0 13 15"><path d="M0 0L13 7.5L0 15Z" fill="#616161"/></svg>
<div class="r" style="left:551px;top:143px;width:14px;height:14px;background:#616161;"></div>
<svg class="r" style="left:595.75px;top:135.65px" width="27.3" height="27.3" viewBox="0 0 24 24"><path d="M17.65 6.35A7.958 7.958 0 0 0 12 4c-4.42 0-7.99 3.58-7.99 8s3.57 8 7.99 8c3.73 0 6.84-2.55 7.73-6h-2.08A5.99 5.99 0 0 1 12 18c-3.31 0-6-2.69-6-6s2.69-6 6-6c1.66 0 3.14.69 4.22 1.78L13 11h7V4l-2.35 2.35z" fill="#616161"/></svg>
<svg class="r" style="left:651px;top:143px;" width="21" height="13" viewBox="0 0 21 13"><path d="M0 0L10 6.5L0 13ZM10 0L20.5 6.5L10 13Z" fill="#616161"/></svg>
<div class="t" style="left:711.20px;top:135.27px;font-family:'Liberation Sans';font-size:24px;line-height:1.1172em;color:#000000;font-weight:normal;letter-spacing:0.79px;">Markdown</div>
<svg class="r" style="left:845px;top:146px;" width="16" height="10" viewBox="0 0 16 10"><path d="M1 1.5L8 8.5L15 1.5" fill="none" stroke="#616161" stroke-width="2"/></svg>
<div class="t" style="left:1312.70px;top:135.17px;font-family:'Liberation Sans';font-size:24px;line-height:1.1172em;color:#000000;font-weight:normal;letter-spacing:0.27px;">Julia 1.5.2</div>
<div class="r" style="left:1453.5px;top:137px;width:23px;height:23px;border-radius:50%;border:2px solid #616161"></div>
<div class="r" style="left:1483px;top:174px;width:12px;height:814px;background:#cfcfcf;"></div>
<div class="r" style="left:1483px;top:174px;width:1px;height:814px;background:#c8c3bf;"></div>
<div class="r" style="left:1486px;top:177px;width:6px;height:104px;border-radius:3px;background:#7e8282"></div>
<div class="r" style="left:154px;top:997px;width:1351px;height:41px;background:#eeeeee;"></div>
<div class="t" style="left:185.00px;top:1004.67px;font-family:'Liberation Sans';font-size:25px;line-height:1.1172em;color:#000;font-weight:normal;letter-spacing:0px;">0</div>
<div class="r" style="left:217px;top:1007px;width:26px;height:25px;background:#424242;"></div>
<div class="t" style="left:220.00px;top:1014.51px;font-family:'Liberation Mono';font-size:15px;line-height:1.1328em;color:#eeeeee;font-weight:bold;letter-spacing:0px;">$_</div>
<div class="t" style="left:260.50px;top:1004.67px;font-family:'Liberation Sans';font-size:25px;line-height:1.1172em;color:#000;font-weight:normal;letter-spacing:0px;">1</div>
<svg class="r" style="left:291px;top:1005px;" width="25" height="25" viewBox="0 0 25 25"><rect x="4" y="4" width="17" height="17" rx="1" fill="none" stroke="#616161" stroke-width="2.6"/><rect x="9" y="9" width="7" height="7" fill="none" stroke="#616161" stroke-width="2.6"/><path d="M8 0V4M12.5 0V4M17 0V4M8 21V25M12.5 21V25M17 21V25M0 8H4M0 12.5H4M0 17H4M21 8H25M21 12.5H25M21 17H25" stroke="#616161" stroke-width="2"/></svg>
<div class="t" style="left:347.80px;top:1003.57px;font-family:'Liberation Sans';font-size:25px;line-height:1.1172em;color:#000;font-weight:normal;letter-spacing:-0.39px;">Julia 1.5.2 | Idle</div>
<div class="t" style="left:598.60px;top:1003.57px;font-family:'Liberation Sans';font-size:25px;line-height:1.1172em;color:#000;font-weight:normal;letter-spacing:-0.16px;">Saving completed</div>
<div class="t" style="left:876.30px;top:1003.57px;font-family:'Liberation Sans';font-size:25px;line-height:1.1172em;color:#000;font-weight:normal;letter-spacing:-0.53px;">Mode: Command</div>
<svg class="r" style="left:1095px;top:1005px;" width="26" height="24" viewBox="0 0 26 24"><path d="M12.5 1.5L23 5V11Q23 19 12.5 23Q2 19 2 11V5Z" fill="none" stroke="#616161" stroke-width="2.5" stroke-linejoin="round"/><path d="M8.5 8L16.5 16M16.5 8L8.5 16" stroke="#616161" stroke-width="2.3"/></svg>
<div class="t" style="left:1150.60px;top:1003.57px;font-family:'Liberation Sans';font-size:25px;line-height:1.1172em;color:#000;font-weight:normal;letter-spacing:-0.51px;">Ln 2, Col 46</div>
<div class="t" style="left:1305.60px;top:1003.57px;font-family:'Liberation Sans';font-size:25px;line-height:1.1172em;color:#000;font-weight:normal;letter-spacing:0.19px;">Untitled5.ipynb</div>
<div class="t" style="left:378.50px;top:205.46px;font-family:'Liberation Sans';font-size:26px;line-height:1.1172em;color:#111111;font-weight:normal;letter-spacing:0.96px;-webkit-text-stroke:0.7px #111">Aitkin's</div>
<div class="t" style="left:472px;top:202px;font-family:'Liberation Serif';font-style:italic;font-size:32px;line-height:1;color:#111">&#948;</div>
<div class="t" style="left:488.5px;top:199px;font-family:'Liberation Serif';font-size:21px;line-height:1;color:#111">2</div>
<div class="t" style="left:501.50px;top:205.46px;font-family:'Liberation Sans';font-size:26px;line-height:1.1172em;color:#111111;font-weight:normal;letter-spacing:0.23px;-webkit-text-stroke:0.7px #111">-method</div>
<div class="r" style="left:369px;top:269px;width:1089px;height:77px;background:#f5f5f5;border:1px solid #e0e0e0"></div>
<div class="r" style="left:377px;top:278px;width:1073px;height:29.5px;background:#d9d9d9;"></div>
<div class="r" style="left:377px;top:307.5px;width:416px;height:29.5px;background:#d9d9d9;"></div>
<div class="t" style="left:306.5px;top:281.35px;font-family:'Liberation Mono';font-size:23px;line-height:1.1328em;letter-spacing:-0.380px;color:#212121"><span style="color:#a8a8a8">[2]:</span></div>
<div class="t" style="left:377px;top:281.15px;font-family:'Liberation Mono';font-size:23px;line-height:1.1328em;letter-spacing:-0.380px;color:#212121"><span style="color:#212121">m</span><span style="color:#aa22ff;font-weight:bold">=</span><span style="color:#008000">10</span></div>
<div class="t" style="left:377px;top:310.75px;font-family:'Liberation Mono';font-size:23px;line-height:1.1328em;letter-spacing:-0.380px;color:#212121"><span style="color:#0000ff">F</span><span style="color:#212121">(</span><span style="color:#212121">x</span><span style="color:#212121">)</span><span style="color:#aa22ff;font-weight:bold">=</span><span style="color:#212121">(</span><span style="color:#212121">(</span><span style="color:#212121">(</span><span style="color:#aa22ff;font-weight:bold">-</span><span style="color:#008000">3</span><span style="color:#aa22ff;font-weight:bold">*</span><span style="color:#212121">x</span><span style="color:#aa22ff;font-weight:bold">-</span><span style="color:#008000">2</span><span style="color:#212121">)</span><span style="color:#aa22ff;font-weight:bold">*</span><span style="color:#212121">x</span><span style="color:#aa22ff;font-weight:bold">+</span><span style="color:#212121">m</span><span style="color:#212121">)</span><span style="color:#aa22ff;font-weight:bold">*</span><span style="color:#212121">x</span><span style="color:#aa22ff;font-weight:bold">-</span><span style="color:#008000">1</span><span style="color:#212121">)</span><span style="color:#aa22ff;font-weight:bold">/</span><span style="color:#212121">(</span><span style="color:#212121">m</span><span style="color:#aa22ff;font-weight:bold">+</span><span style="color:#008000">1</span><span style="color:#212121">)</span></div>
<div class="t" style="left:306.5px;top:364.85px;font-family:'Liberation Mono';font-size:23px;line-height:1.1328em;letter-spacing:-0.380px;color:#212121"><span style="color:#a8a8a8">[2]:</span></div>
<div class="t" style="left:377px;top:364.85px;font-family:'Liberation Mono';font-size:23px;line-height:1.1328em;letter-spacing:-0.380px;color:#212121"><span style="color:#212121">F (generic function with 1 method)</span></div>
<div class="r" style="left:369px;top:421px;width:1089px;height:106px;background:#f5f5f5;border:1px solid #e0e0e0"></div>
<div class="r" style="left:377px;top:430px;width:1073px;height:58px;background:#d9d9d9;"></div>
<div class="r" style="left:377px;top:488px;width:121px;height:29px;background:#d9d9d9;"></div>
<div class="t" style="left:306.5px;top:432.35px;font-family:'Liberation Mono';font-size:23px;line-height:1.1328em;letter-spacing:-0.380px;color:#212121"><span style="color:#a8a8a8">[4]:</span></div>
<div class="t" style="left:377px;top:432.25px;font-family:'Liberation Mono';font-size:23px;line-height:1.1328em;letter-spacing:-0.380px;color:#212121"><span style="color:#212121">x</span><span style="color:#212121">0</span><span style="color:#aa22ff;font-weight:bold">=</span><span style="color:#aa22ff;font-weight:bold">-</span><span style="color:#008000">0.75</span></div>
<div class="t" style="left:377px;top:461.35px;font-family:'Liberation Mono';font-size:23px;line-height:1.1328em;letter-spacing:-0.380px;color:#212121"><span style="color:#212121">x</span><span style="color:#212121">1</span><span style="color:#aa22ff;font-weight:bold">=</span><span style="color:#008000">F</span><span style="color:#212121">(</span><span style="color:#212121">x</span><span style="color:#212121">0</span><span style="color:#212121">)</span></div>
<div class="t" style="left:377px;top:490.55px;font-family:'Liberation Mono';font-size:23px;line-height:1.1328em;letter-spacing:-0.380px;color:#212121"><span style="color:#212121">x</span><span style="color:#212121">2</span><span style="color:#aa22ff;font-weight:bold">=</span><span style="color:#008000">F</span><span style="color:#212121">(</span><span style="color:#212121">x</span><span style="color:#212121">1</span><span style="color:#212121">)</span><span style="color:#212121">;</span></div>
<div class="r" style="left:369px;top:544px;width:1089px;height:48px;background:#f5f5f5;border:1px solid #e0e0e0"></div>
<div class="r" style="left:377px;top:554px;width:496.5px;height:29px;background:#d9d9d9;"></div>
<div class="t" style="left:306.5px;top:556.85px;font-family:'Liberation Mono';font-size:23px;line-height:1.1328em;letter-spacing:-0.380px;color:#212121"><span style="color:#a8a8a8">[6]:</span></div>
<div class="t" style="left:377px;top:556.85px;font-family:'Liberation Mono';font-size:23px;line-height:1.1328em;letter-spacing:-0.380px;color:#212121"><span style="color:#008000">println</span><span style="color:#212121">(</span><span style="color:#ba2121">"x0="</span><span style="color:#212121">,</span><span style="color:#212121">x</span><span style="color:#212121">0</span><span style="color:#212121">,</span><span style="color:#ba2121">" x1="</span><span style="color:#212121">,</span><span style="color:#212121">x</span><span style="color:#212121">1</span><span style="color:#212121">,</span><span style="color:#ba2121">" x2="</span><span style="color:#212121">,</span><span style="color:#212121">x</span><span style="color:#212121">2</span><span style="color:#212121">)</span></div>
<div class="t" style="left:377px;top:602.55px;font-family:'Liberation Mono';font-size:23px;line-height:1.1328em;letter-spacing:-0.380px;color:#212121"><span style="color:#212121">x0=-0.75 x1=-0.7599431818181818 x2=-0.7670751308110003</span></div>
<div class="r" style="left:369px;top:652px;width:1089px;height:49px;background:#f5f5f5;border:1px solid #e0e0e0"></div>
<div class="r" style="left:377px;top:662px;width:698px;height:29px;background:#d9d9d9;"></div>
<div class="t" style="left:306.5px;top:664.85px;font-family:'Liberation Mono';font-size:23px;line-height:1.1328em;letter-spacing:-0.380px;color:#212121"><span style="color:#a8a8a8">[7]:</span></div>
<div class="t" style="left:377px;top:664.85px;font-family:'Liberation Mono';font-size:23px;line-height:1.1328em;letter-spacing:-0.380px;color:#212121"><span style="color:#0000ff">d2</span><span style="color:#212121">(</span><span style="color:#212121">x</span><span style="color:#212121">n</span><span style="color:#212121">,</span><span style="color:#212121">x</span><span style="color:#212121">n</span><span style="color:#212121">p</span><span style="color:#212121">1</span><span style="color:#212121">,</span><span style="color:#212121">x</span><span style="color:#212121">n</span><span style="color:#212121">p</span><span style="color:#212121">2</span><span style="color:#212121">)</span><span style="color:#aa22ff;font-weight:bold">=</span><span style="color:#212121">x</span><span style="color:#212121">n</span><span style="color:#212121">p</span><span style="color:#212121">2</span><span style="color:#aa22ff;font-weight:bold">-</span><span style="color:#212121">(</span><span style="color:#212121">x</span><span style="color:#212121">n</span><span style="color:#212121">p</span><span style="color:#212121">1</span><span style="color:#aa22ff;font-weight:bold">-</span><span style="color:#212121">x</span><span style="color:#212121">n</span><span style="color:#212121">p</span><span style="color:#212121">2</span><span style="color:#212121">)</span><span style="color:#aa22ff;font-weight:bold">^</span><span style="color:#008000">2</span><span style="color:#aa22ff;font-weight:bold">/</span><span style="color:#212121">(</span><span style="color:#212121">x</span><span style="color:#212121">n</span><span style="color:#212121">p</span><span style="color:#212121">2</span><span style="color:#aa22ff;font-weight:bold">-</span><span style="color:#008000">2</span><span style="color:#aa22ff;font-weight:bold">*</span><span style="color:#212121">x</span><span style="color:#212121">n</span><span style="color:#212121">p</span><span style="color:#212121">1</span><span style="color:#aa22ff;font-weight:bold">+</span><span style="color:#212121">x</span><span style="color:#212121">n</span><span style="color:#212121">)</span></div>
<div class="t" style="left:306.5px;top:719.55px;font-family:'Liberation Mono';font-size:23px;line-height:1.1328em;letter-spacing:-0.380px;color:#212121"><span style="color:#a8a8a8">[7]:</span></div>
<div class="t" style="left:377px;top:719.55px;font-family:'Liberation Mono';font-size:23px;line-height:1.1328em;letter-spacing:-0.380px;color:#212121"><span style="color:#212121">d2 (generic function with 1 method)</span></div>
<div class="r" style="left:369px;top:775px;width:1089px;height:48px;background:#f5f5f5;border:1px solid #e0e0e0"></div>
<div class="r" style="left:377px;top:785px;width:201.3px;height:29px;background:#d9d9d9;"></div>
<div class="t" style="left:306.5px;top:786.35px;font-family:'Liberation Mono';font-size:23px;line-height:1.1328em;letter-spacing:-0.380px;color:#212121"><span style="color:#a8a8a8">[8]:</span></div>
<div class="t" style="left:377px;top:786.35px;font-family:'Liberation Mono';font-size:23px;line-height:1.1328em;letter-spacing:-0.380px;color:#212121"><span style="color:#212121">x</span><span style="color:#212121">3</span><span style="color:#aa22ff;font-weight:bold">=</span><span style="color:#008000">d2</span><span style="color:#212121">(</span><span style="color:#212121">x</span><span style="color:#212121">0</span><span style="color:#212121">,</span><span style="color:#212121">x</span><span style="color:#212121">1</span><span style="color:#212121">,</span><span style="color:#212121">x</span><span style="color:#212121">2</span><span style="color:#212121">)</span></div>
<div class="t" style="left:306.5px;top:841.85px;font-family:'Liberation Mono';font-size:23px;line-height:1.1328em;letter-spacing:-0.380px;color:#212121"><span style="color:#a8a8a8">[8]:</span></div>
<div class="t" style="left:377px;top:841.85px;font-family:'Liberation Mono';font-size:23px;line-height:1.1328em;letter-spacing:-0.380px;color:#212121"><span style="color:#212121">-0.7851685081994753</span></div>
<div class="r" style="left:369px;top:897px;width:1089px;height:48px;background:#f5f5f5;border:1px solid #e0e0e0"></div>
<div class="t" style="left:306.5px;top:908.85px;font-family:'Liberation Mono';font-size:23px;line-height:1.1328em;letter-spacing:-0.380px;color:#212121"><span style="color:#a8a8a8">[9]:</span></div>
<div class="t" style="left:377px;top:908.85px;font-family:'Liberation Mono';font-size:23px;line-height:1.1328em;letter-spacing:-0.380px;color:#212121"><span style="color:#212121">x</span><span style="color:#212121">4</span><span style="color:#aa22ff;font-weight:bold">=</span><span style="color:#008000">d2</span><span style="color:#212121">(</span><span style="color:#212121">x</span><span style="color:#212121">1</span><span style="color:#212121">,</span><span style="color:#212121">x</span><span style="color:#212121">2</span><span style="color:#212121">,</span><span style="color:#212121">x</span><span style="color:#212121">3</span><span style="color:#212121">)</span></div>
<div class="t" style="left:306.5px;top:963.35px;font-family:'Liberation Mono';font-size:23px;line-height:1.1328em;letter-spacing:-0.380px;color:#212121"><span style="color:#a8a8a8">[9]:</span></div>
<div class="t" style="left:377px;top:963.35px;font-family:'Liberation Mono';font-size:23px;line-height:1.1328em;letter-spacing:-0.380px;color:#212121"><span style="color:#212121">-0.7553028471281954</span></div>
<div class="r" style="left:210px;top:988px;width:1295px;height:9px;background:#bdbdbd;"></div>
<div class="r" style="left:1483px;top:174px;width:12px;height:814px;background:#cfcfcf;"></div>
<div class="r" style="left:1483px;top:174px;width:1px;height:814px;background:#c8c3bf;"></div>
<div class="r" style="left:1486px;top:177px;width:6px;height:104px;border-radius:3px;background:#7e8282"></div>
<div class="r" style="left:1031px;top:1045px;width:2px;height:5px;background:#a4b0c0;"></div>
<div class="r" style="left:1033px;top:1045px;width:2px;height:5px;background:#6f7b8a;"></div>
<div class="r" style="left:1035px;top:1045px;width:2px;height:5px;background:#3a3a3a;"></div>
<div class="r" style="left:1038px;top:1045px;width:12px;height:5px;background:repeating-conic-gradient(#fff 0 25%,#000 0 50%) 0 0/2px 2px;"></div>
<div class="r" style="left:1050px;top:1045px;width:130px;height:5px;background:#000;"></div>
</body></html>
